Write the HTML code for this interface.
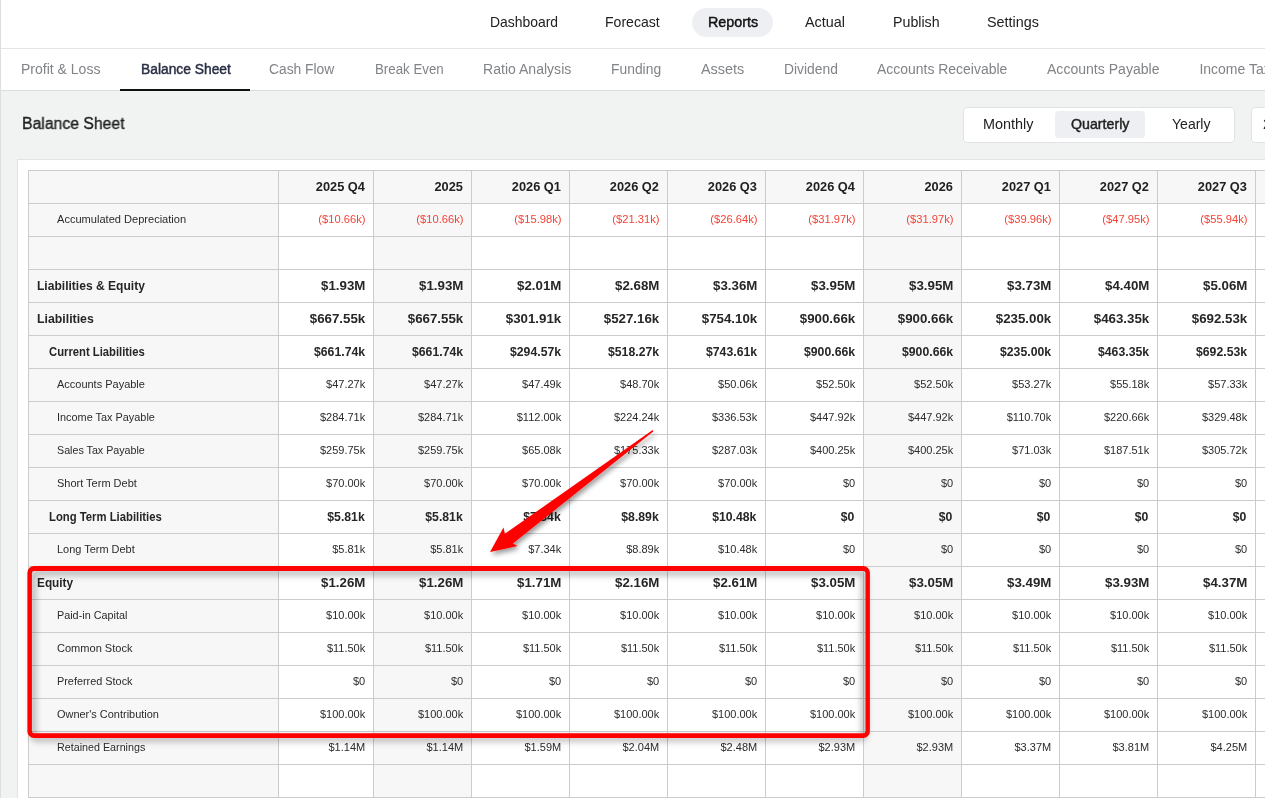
<!DOCTYPE html>
<html lang="en"><head><meta charset="utf-8"><title>Balance Sheet</title>
<style>
*{box-sizing:border-box}
html,body{margin:0;padding:0}
body{width:1265px;height:798px;overflow:hidden;background:#f1f3f3;font-family:"Liberation Sans",Arial,sans-serif;color:#212121;position:relative}
.leftline{position:absolute;left:0;top:0;width:1px;height:798px;background:#dedede;z-index:5}
.topnav{position:absolute;left:1px;top:0;width:1264px;height:49px;background:#fff;border-bottom:1px solid #e4e4e4}
.pill{position:absolute;left:692px;top:8px;width:81px;height:29px;border-radius:15px;background:#eeeff2}
.tabs{position:absolute;left:1px;top:49px;width:1264px;height:42px;background:#fff;border-bottom:1px solid #dcdcdc}
.tabul{position:absolute;left:120px;top:89px;width:130px;height:2px;background:#111}
.t{position:absolute;white-space:nowrap;transform-origin:0 50%;display:block}
.t.nav{top:13px;font-size:15px;line-height:18px;color:#212121}
.t.nav.m{color:#111;-webkit-text-stroke:0.45px #111}
.t.tab{top:60px;font-size:14px;line-height:18px;color:#808387}
.t.tab.m{color:#2a2f45;-webkit-text-stroke:0.45px #2a2f45}

.t.ttl{top:114px;font-size:16px;line-height:20px;color:#212121;-webkit-text-stroke:0.35px #212121}
.t.sg{top:115px;font-size:15px;line-height:18px;color:#212121}
.t.sg.m{-webkit-text-stroke:0.45px #212121}
.seg{position:absolute;left:963px;top:107px;width:272px;height:36px;background:#fff;border:1px solid #e0e2e4;border-radius:4px}
.segact{position:absolute;left:1055px;top:111px;width:90px;height:27px;background:#eeeff2;border-radius:4px}
.seg2{position:absolute;left:1251px;top:107px;width:40px;height:36px;background:#fff;border:1px solid #e0e2e4;border-radius:4px}
.card{position:absolute;left:17px;top:159px;width:1260px;height:660px;background:#fff;border:1px solid #e3e3e3}
table.bs{position:absolute;left:28px;top:170px;border-collapse:collapse;table-layout:fixed;width:1325px;font-size:11px}
table.bs th,table.bs td{border:1px solid #ccc;height:33px;padding:0 7.8px 2px 0;text-align:right;vertical-align:middle;white-space:nowrap;overflow:hidden;color:#2b2b2b}
table.bs i{font-style:normal;display:inline-block;transform-origin:100% 50%}
table.bs td.l i{transform-origin:0 50%}
table.bs th{background:#f7f7f7;font-size:13px;font-weight:bold;color:#212121}
table.bs th i{transform:scaleX(.984)}
table.bs td.l,table.bs th.l{background:#f7f7f7;text-align:left;padding:0 0 2px 0}
table.bs td.y{background:#f7f7f7}
tr.sub td{font-size:11px}
tr.sub td i{transform:scaleX(1)}
tr.sub td.l i{margin-left:27.9px}
tr.b0 td{font-weight:bold;font-size:13px;color:#262626}
tr.b0 td i{transform:scaleX(1.022)}
tr.b0 td.l i{margin-left:7.7px}
tr.b1 td{font-weight:bold;font-size:12px;color:#262626;padding-bottom:0 !important;padding-right:8.4px}
tr.b1 td i{transform:scaleX(1.02)}
tr.b1 td.l i{margin-left:19.8px}
tr.neg td{color:#f44336}
tr.neg td i{transform:scaleX(1.015)}
tr.neg td.l{color:#2b2b2b}
svg.anno{position:absolute;left:0;top:0;width:1265px;height:798px;pointer-events:none;z-index:10}
#root{position:absolute;left:0;top:0;width:1265px;height:798px;will-change:transform}
</style></head><body><div id="root">
<div class="leftline"></div>
<div class="topnav"></div>
<div class="pill"></div>
<div class="tabs"></div>
<div class="tabul"></div>
<div class="seg"></div><div class="segact"></div>
<div class="seg2"></div>
<span id="t0" class="t nav " style="left:489.6px;transform:scaleX(0.9279)">Dashboard</span>
<span id="t1" class="t nav " style="left:605.2px;transform:scaleX(0.9373)">Forecast</span>
<span id="t2" class="t nav m" style="left:707.8px;transform:scaleX(0.9537)">Reports</span>
<span id="t3" class="t nav " style="left:804.9px;transform:scaleX(0.9592)">Actual</span>
<span id="t4" class="t nav " style="left:892.7px;transform:scaleX(0.9471)">Publish</span>
<span id="t5" class="t nav " style="left:986.6px;transform:scaleX(0.9557)">Settings</span>
<span id="t6" class="t tab " style="left:20.6px;transform:scaleX(1.0003)">Profit &amp; Loss</span>
<span id="t7" class="t tab m" style="left:140.6px;transform:scaleX(0.9871)">Balance Sheet</span>
<span id="t8" class="t tab " style="left:269.4px;transform:scaleX(0.9873)">Cash Flow</span>
<span id="t9" class="t tab " style="left:374.7px;transform:scaleX(0.9492)">Break Even</span>
<span id="t10" class="t tab " style="left:482.9px;transform:scaleX(1.0041)">Ratio Analysis</span>
<span id="t11" class="t tab " style="left:611.1px;transform:scaleX(0.9902)">Funding</span>
<span id="t12" class="t tab " style="left:701.0px;transform:scaleX(1.0282)">Assets</span>
<span id="t13" class="t tab " style="left:783.8px;transform:scaleX(0.9893)">Dividend</span>
<span id="t14" class="t tab " style="left:877.0px;transform:scaleX(0.9966)">Accounts Receivable</span>
<span id="t15" class="t tab " style="left:1046.6px;transform:scaleX(1.0038)">Accounts Payable</span>
<span id="t16" class="t tab " style="left:1199.4px;transform:scaleX(1.0000)">Income Tax</span>
<span id="t17" class="t ttl m" style="left:22.3px;transform:scaleX(0.9848)">Balance Sheet</span>
<span id="t18" class="t sg " style="left:982.9px;transform:scaleX(0.9613)">Monthly</span>
<span id="t19" class="t sg m" style="left:1071.3px;transform:scaleX(0.9467)">Quarterly</span>
<span id="t20" class="t sg " style="left:1171.8px;transform:scaleX(0.9358)">Yearly</span>
<span id="t21" class="t sg " style="left:1263.0px;transform:scaleX(0.9300)">2026</span>
<div class="card"></div>
<table class="bs"><colgroup><col style="width:250px"><col style="width:95px"><col style="width:98px"><col style="width:98px"><col style="width:98px"><col style="width:98px"><col style="width:98px"><col style="width:98px"><col style="width:98px"><col style="width:98px"><col style="width:98px"><col style="width:98px"></colgroup>
<thead><tr><th class="l"></th><th><i>2025 Q4</i></th><th><i>2025</i></th><th><i>2026 Q1</i></th><th><i>2026 Q2</i></th><th><i>2026 Q3</i></th><th><i>2026 Q4</i></th><th><i>2026</i></th><th><i>2027 Q1</i></th><th><i>2027 Q2</i></th><th><i>2027 Q3</i></th><th></th></tr></thead><tbody>
<tr class="sub neg"><td class="l"><i id="L2" style="transform:scaleX(1.0054)">Accumulated Depreciation</i></td><td><i>($10.66k)</i></td><td class="y"><i>($10.66k)</i></td><td><i>($15.98k)</i></td><td><i>($21.31k)</i></td><td><i>($26.64k)</i></td><td><i>($31.97k)</i></td><td class="y"><i>($31.97k)</i></td><td><i>($39.96k)</i></td><td><i>($47.95k)</i></td><td><i>($55.94k)</i></td><td></td></tr>
<tr class=""><td class="l"></td><td></td><td class="y"></td><td></td><td></td><td></td><td></td><td class="y"></td><td></td><td></td><td></td><td></td></tr>
<tr class="b0"><td class="l"><i id="L4" style="transform:scaleX(0.9278)">Liabilities &amp; Equity</i></td><td><i>$1.93M</i></td><td class="y"><i>$1.93M</i></td><td><i>$2.01M</i></td><td><i>$2.68M</i></td><td><i>$3.36M</i></td><td><i>$3.95M</i></td><td class="y"><i>$3.95M</i></td><td><i>$3.73M</i></td><td><i>$4.40M</i></td><td><i>$5.06M</i></td><td></td></tr>
<tr class="b0"><td class="l"><i id="L5" style="transform:scaleX(0.9472)">Liabilities</i></td><td><i>$667.55k</i></td><td class="y"><i>$667.55k</i></td><td><i>$301.91k</i></td><td><i>$527.16k</i></td><td><i>$754.10k</i></td><td><i>$900.66k</i></td><td class="y"><i>$900.66k</i></td><td><i>$235.00k</i></td><td><i>$463.35k</i></td><td><i>$692.53k</i></td><td></td></tr>
<tr class="b1"><td class="l"><i id="L6" style="transform:scaleX(0.9379)">Current Liabilities</i></td><td><i>$661.74k</i></td><td class="y"><i>$661.74k</i></td><td><i>$294.57k</i></td><td><i>$518.27k</i></td><td><i>$743.61k</i></td><td><i>$900.66k</i></td><td class="y"><i>$900.66k</i></td><td><i>$235.00k</i></td><td><i>$463.35k</i></td><td><i>$692.53k</i></td><td></td></tr>
<tr class="sub"><td class="l"><i id="L7" style="transform:scaleX(0.9982)">Accounts Payable</i></td><td><i>$47.27k</i></td><td class="y"><i>$47.27k</i></td><td><i>$47.49k</i></td><td><i>$48.70k</i></td><td><i>$50.06k</i></td><td><i>$52.50k</i></td><td class="y"><i>$52.50k</i></td><td><i>$53.27k</i></td><td><i>$55.18k</i></td><td><i>$57.33k</i></td><td></td></tr>
<tr class="sub"><td class="l"><i id="L8" style="transform:scaleX(0.9903)">Income Tax Payable</i></td><td><i>$284.71k</i></td><td class="y"><i>$284.71k</i></td><td><i>$112.00k</i></td><td><i>$224.24k</i></td><td><i>$336.53k</i></td><td><i>$447.92k</i></td><td class="y"><i>$447.92k</i></td><td><i>$110.70k</i></td><td><i>$220.66k</i></td><td><i>$329.48k</i></td><td></td></tr>
<tr class="sub"><td class="l"><i id="L9" style="transform:scaleX(0.9722)">Sales Tax Payable</i></td><td><i>$259.75k</i></td><td class="y"><i>$259.75k</i></td><td><i>$65.08k</i></td><td><i>$175.33k</i></td><td><i>$287.03k</i></td><td><i>$400.25k</i></td><td class="y"><i>$400.25k</i></td><td><i>$71.03k</i></td><td><i>$187.51k</i></td><td><i>$305.72k</i></td><td></td></tr>
<tr class="sub"><td class="l"><i id="L10" style="transform:scaleX(0.9989)">Short Term Debt</i></td><td><i>$70.00k</i></td><td class="y"><i>$70.00k</i></td><td><i>$70.00k</i></td><td><i>$70.00k</i></td><td><i>$70.00k</i></td><td><i>$0</i></td><td class="y"><i>$0</i></td><td><i>$0</i></td><td><i>$0</i></td><td><i>$0</i></td><td></td></tr>
<tr class="b1"><td class="l"><i id="L11" style="transform:scaleX(0.9416)">Long Term Liabilities</i></td><td><i>$5.81k</i></td><td class="y"><i>$5.81k</i></td><td><i>$7.34k</i></td><td><i>$8.89k</i></td><td><i>$10.48k</i></td><td><i>$0</i></td><td class="y"><i>$0</i></td><td><i>$0</i></td><td><i>$0</i></td><td><i>$0</i></td><td></td></tr>
<tr class="sub"><td class="l"><i id="L12" style="transform:scaleX(0.9952)">Long Term Debt</i></td><td><i>$5.81k</i></td><td class="y"><i>$5.81k</i></td><td><i>$7.34k</i></td><td><i>$8.89k</i></td><td><i>$10.48k</i></td><td><i>$0</i></td><td class="y"><i>$0</i></td><td><i>$0</i></td><td><i>$0</i></td><td><i>$0</i></td><td></td></tr>
<tr class="b0"><td class="l"><i id="L13" style="transform:scaleX(0.9085)">Equity</i></td><td><i>$1.26M</i></td><td class="y"><i>$1.26M</i></td><td><i>$1.71M</i></td><td><i>$2.16M</i></td><td><i>$2.61M</i></td><td><i>$3.05M</i></td><td class="y"><i>$3.05M</i></td><td><i>$3.49M</i></td><td><i>$3.93M</i></td><td><i>$4.37M</i></td><td></td></tr>
<tr class="sub"><td class="l"><i id="L14" style="transform:scaleX(0.9826)">Paid-in Capital</i></td><td><i>$10.00k</i></td><td class="y"><i>$10.00k</i></td><td><i>$10.00k</i></td><td><i>$10.00k</i></td><td><i>$10.00k</i></td><td><i>$10.00k</i></td><td class="y"><i>$10.00k</i></td><td><i>$10.00k</i></td><td><i>$10.00k</i></td><td><i>$10.00k</i></td><td></td></tr>
<tr class="sub"><td class="l"><i id="L15" style="transform:scaleX(1.0039)">Common Stock</i></td><td><i>$11.50k</i></td><td class="y"><i>$11.50k</i></td><td><i>$11.50k</i></td><td><i>$11.50k</i></td><td><i>$11.50k</i></td><td><i>$11.50k</i></td><td class="y"><i>$11.50k</i></td><td><i>$11.50k</i></td><td><i>$11.50k</i></td><td><i>$11.50k</i></td><td></td></tr>
<tr class="sub"><td class="l"><i id="L16" style="transform:scaleX(0.9879)">Preferred Stock</i></td><td><i>$0</i></td><td class="y"><i>$0</i></td><td><i>$0</i></td><td><i>$0</i></td><td><i>$0</i></td><td><i>$0</i></td><td class="y"><i>$0</i></td><td><i>$0</i></td><td><i>$0</i></td><td><i>$0</i></td><td></td></tr>
<tr class="sub"><td class="l"><i id="L17" style="transform:scaleX(0.9954)">Owner&#x27;s Contribution</i></td><td><i>$100.00k</i></td><td class="y"><i>$100.00k</i></td><td><i>$100.00k</i></td><td><i>$100.00k</i></td><td><i>$100.00k</i></td><td><i>$100.00k</i></td><td class="y"><i>$100.00k</i></td><td><i>$100.00k</i></td><td><i>$100.00k</i></td><td><i>$100.00k</i></td><td></td></tr>
<tr class="sub"><td class="l"><i id="L18" style="transform:scaleX(0.9755)">Retained Earnings</i></td><td><i>$1.14M</i></td><td class="y"><i>$1.14M</i></td><td><i>$1.59M</i></td><td><i>$2.04M</i></td><td><i>$2.48M</i></td><td><i>$2.93M</i></td><td class="y"><i>$2.93M</i></td><td><i>$3.37M</i></td><td><i>$3.81M</i></td><td><i>$4.25M</i></td><td></td></tr>
<tr class=""><td class="l"></td><td></td><td class="y"></td><td></td><td></td><td></td><td></td><td class="y"></td><td></td><td></td><td></td><td></td></tr>
</tbody></table>
<svg class="anno" viewBox="0 0 1265 798">
<defs>
<filter id="bl" x="-5%" y="-10%" width="110%" height="120%"><feGaussianBlur stdDeviation="3"/></filter>
<filter id="sh" x="-10%" y="-10%" width="130%" height="130%"><feGaussianBlur in="SourceAlpha" stdDeviation="2.8"/><feOffset dx="2.4" dy="3"/><feComponentTransfer><feFuncA type="linear" slope="0.4"/></feComponentTransfer><feMerge><feMergeNode/><feMergeNode in="SourceGraphic"/></feMerge></filter>
</defs>
<rect x="33" y="572.6" width="831.4" height="166" rx="4" ry="4" fill="none" stroke="#000" stroke-opacity="0.3" stroke-width="5.4" filter="url(#bl)"/>
<path fill="#fe0202" fill-rule="evenodd" d="M34 566 H863.3 A6.6 6.6 0 0 1 869.9 572.6 V731.4 A6.6 6.6 0 0 1 863.3 738 H34 A6.6 6.6 0 0 1 27.4 731.4 V572.6 A6.6 6.6 0 0 1 34 566 Z M34.1 570.9 A2.2 2.2 0 0 0 31.9 573.1 V731 A2.2 2.2 0 0 0 34.1 733.2 H863.3 A2.2 2.2 0 0 0 865.5 731 V573.1 A2.2 2.2 0 0 0 863.3 570.9 Z"/>
<g filter="url(#sh)">
<path d="M652.7 430.1 L504.9 533.7 L503.5 527.6 L490.06 552 L517.6 546.1 L512.9 543.6 L653.2 431.5 Z" fill="#fe0202"/>
</g>
</svg>
</div>
</body></html>
